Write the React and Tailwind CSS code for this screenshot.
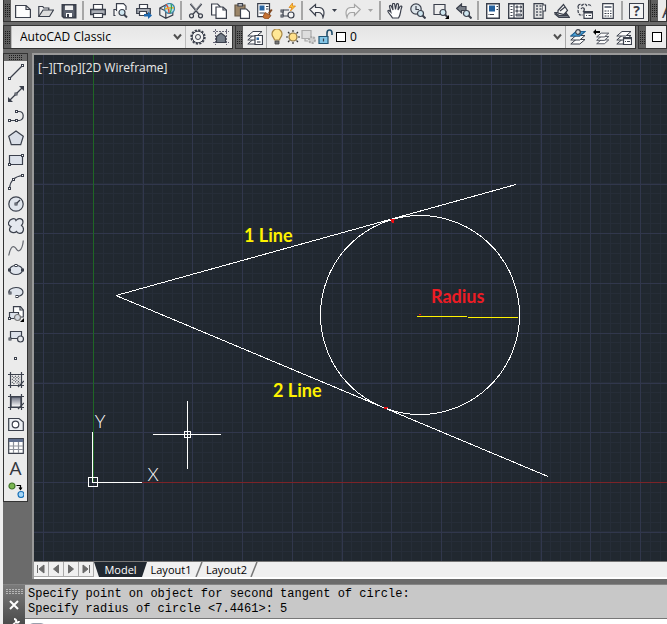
import React from 'react';

const INK = '#3b404c';

const Icon = ({ children, w = 16, h = 16 }) => (
    <svg width={w} height={h} viewBox={`0 0 ${w} ${h}`} fill="none" stroke={INK} strokeWidth="1.2" aria-hidden="true" className="shrink-0">
        {children}
    </svg>
);

// Small square grip drawn on the geometry icons
const Node = ({ x, y }) => <rect x={x - 1} y={y - 1} width="2" height="2" fill="#fff" stroke={INK} strokeWidth="1" />;

const Lens = ({ x, y }) => (
    <g>
        <path d={`M${x + 2} ${y + 2}L${x + 5} ${y + 5}`} strokeWidth="2" />
        <circle cx={x} cy={y} r="3" fill="#cfe6f0" />
    </g>
);

const Layers = () => (
    <g fill="#fbfbfb" strokeWidth="1">
        <path d="M.8 15h9l5.200-4.500H6z" />
        <path d="M.8 11h9L15 6.500H6z" />
        <path d="M.8 7h9L15 2.500H6z" />
    </g>
);

const fileIcons = [
    { label: 'New', art: <path d="M.6 2.500h10.500l4.300 4v8H.6zM11 2.500v4h4.400" fill="#fdfdfd" /> },
    { label: 'Open', art: <><path d="M.8 13.500v-10h4l1 1.500h5v2" fill="#f4f4f4" /><path d="M.8 13.500L5 7h10.500l-4 6.500z" fill="#ddd" /></> },
    { label: 'Save', art: <><path d="M1.500 2h13v12.500H3l-1.500-1.500z" fill="#5b616e" strokeWidth="2" /><path d="M4 2.500h8v4.500H4z" fill="#eee" stroke="none" /><path d="M5 10h6v4H5z" fill="#fff" stroke="none" /><path d="M6 11h2v3H6z" fill={INK} stroke="none" /></> },
];

const printIcons = [
    { label: 'Plot', art: <><path d="M3.500 6V1.500h9V6" fill="#fff" /><path d="M.7 6.500h14.600v5H.7z" fill="#a9adb5" strokeWidth="1.400" /><path d="M3.500 10.500h9v4h-9z" fill="#fff" /></> },
    { label: 'Plot Preview', art: <><path d="M2.500 12.500H1v-6h2M3.500 8V.7h7l2.500 2.500V7" fill="#fff" /><Lens x={9} y={9.5} /></> },
    { label: 'Publish', art: <><path d="M3.500 5V1.500h8V5" fill="#fff" /><path d="M.7 5.500h13.600v5H.7z" fill="#a9adb5" /><path d="M3.500 8.500h7v4h-7z" fill="#fff" /><path d="M8 11h4V8.500l4 4-4 3.500v-2.500H8z" fill="#1c66ad" stroke="none" /></> },
    { label: '3DDWF', art: <><path d="M.8 5l6-3 7 3v7l-7 3.300-6-3.300zM.8 5l6 3v7" fill="#eee" /><circle cx="10.500" cy="5.500" r="5" fill="#b5e3f3" stroke="#3d84a7" /><path d="M7 1.500c2 2 3 6 3 8.500" stroke="#df4a39" strokeWidth="1.500" /><path d="M6 6c3-1 6-2 9-1" stroke="#eaae2f" strokeWidth="1.500" /><path d="M12 1c1 3 1 5-1 9" stroke="#2f9e58" /></> },
];

const editIcons = [
    { label: 'Cut', art: <><path d="M2.500.8L11 11M13.500.8L5 11" strokeWidth="1.800" /><path d="M3 1l8 9M13 1l-8 9" stroke="#eee" strokeWidth=".5" /><circle cx="3.500" cy="12.800" r="2" /><circle cx="12.500" cy="12.800" r="2" /></> },
    { label: 'Copy', art: <><path d="M.6 1h6L9 3.500V12H.6z" fill="#fff" /><path d="M5 4h7l3.400 3v8.400H5z" fill="#fff" /><path d="M12 4v3h3" /></> },
    { label: 'Paste', art: <><path d="M1 2h10v11H1z" fill="#9b8568" stroke="#665947" /><path d="M4 .7h4.500V3H4z" fill="#e6e6e6" /><path d="M6.500 6h6l3 3v6.400h-9z" fill="#fff" /></> },
    { label: 'Match Properties', art: <><path d="M.7.7h11.800v13H.7z" fill="#fff" /><path d="M2.500 2.500h5v5h-5z" fill="#2663a1" stroke="none" /><path d="M9 3.500h2.500M9 6h2.500M2.500 10h5" /><path d="M14.800 6.500l-3 4" stroke="#7f471f" strokeWidth="2" /><path d="M8 9.500l6 3-3 3.500c-3 0-5-1-5-2.500z" fill="#c57132" stroke="#86461d" strokeWidth=".8" /></> },
    { label: 'Block Editor', art: <><path d="M3 7h6M3 7v6h6" /><circle cx="11" cy="12" r="3" fill="#f5f5f5" /><Node x={2} y={13} /><Node x={2} y={8} /><path d="M12.500 0L9 4.500h3L10.500 8 15.500 3h-3z" fill="#ffc73a" stroke="#db831b" strokeWidth=".8" /></> },
];

const undoArt = <path d="M.8 6.500L6.500 1.500v3h3.800c4.500 0 5.700 5 3.700 10-.5-3-1.500-5-4.500-5h-3v3z" fill="#f5f5f5" />;
const redoArt = <path d="M15.200 6.500L9.500 1.500v3H5.700C1.200 4.500 0 9.500 2 14.500c.5-3 1.500-5 4.500-5h3v3z" fill="#f2f2f2" stroke="#a5a5a5" />;

const viewIcons = [
    { label: 'Pan', art: <path d="M5.500 15C4 12 1 10 .8 8c.5-1.300 2 0 3 1L2.500 3.500c0-1.500 1.600-1.500 2 0L6 7 5.500 1.500c0-1.500 2-1.500 2.200 0L8.500 6.500l1-5c.3-1.300 2-1 2 .3L11 7l2-3.500c.9-1 2.200-.3 1.700.8C13 9 14 11 11.500 15z" fill="#fff" /> },
    { label: 'Zoom Realtime', art: <><circle cx="6" cy="6" r="5.200" fill="#dde5ea" /><path d="M6 3v3.500h3" /><Lens x={10.5} y={10.5} /></> },
    { label: 'Zoom Window', art: <><path d="M1 1.500h11v10H1z" fill="#eee" /><Lens x={10} y={9.5} /><path d="M16 12v4h-4z" fill="#000" stroke="none" /></> },
    { label: 'Zoom Previous', art: <><path d="M.5 5.500L5.500 1v2.500H10v4H5.500V10z" fill="#777d86" /><Lens x={10.5} y={10.5} /></> },
];

const paletteIcons = [
    { label: 'Properties', art: <><path d="M1.700.7h12.600v14.600H1.700z" fill="#fff" strokeWidth="1.400" /><path d="M4 2.500h6v6H4z" fill="#235f9c" stroke="none" /><path d="M11.500 3.500h1.500M11.500 6.500h1.500M5 11.500h4M3.500 11.500h1" /></> },
    { label: 'DesignCenter', art: <><path d="M.7.7h14.600v14.600H.7z" fill="#fff" strokeWidth="1.400" /><path d="M6 1v14M2.500 3.500h2M2.500 6.500h2M2.500 9.500h2M2.500 12.500h2" /><path d="M8 3h2v2H8zM12 3h1.500v2H12zM8 7h2v2H8zM12 7h1.500v2H12zM8 11h5.500v2H8z" fill="#9a9fa8" strokeWidth=".8" /></> },
    { label: 'Tool Palettes', art: <><path d="M3 .7h9v14.600H3z" fill="#e0e0e0" /><path d="M12 2h2.500v6H12" fill="#f7f7f7" /><path d="M5 3h2M8.500 3h2M5 6h2M8.500 6h2M5 9h2M8.500 9h2M5 12h2M8.500 12h2" strokeWidth="1.800" stroke="#757a84" /></> },
    { label: 'Sheet Set Manager', art: <><path d="M1 11l4 3.500h10.500L12 10z" fill="#777d88" /><path d="M1 9.500h6l7 3H5z" fill="#eee" /><path d="M4 7.500L9.500 1.500l4 6-3.500 4-6-1.500z" fill="#f6f6f6" /><path d="M6 8l5-4" /></> },
    { label: 'Markup Set Manager', art: <><path d="M1 3c1-2 3-2 4-.5C7 0 9 1 9.500 2.500 12 1 14 2 14 4M1 3c0 2 1 2 0 4 0 3 1 4 2 5h3" strokeDasharray="3 1" /><path d="M4 6c2-3 5 0 2 3" /><path d="M7 8.500h8.500v6.800H7z" fill="#fff" /><path d="M7 9.500h8.500" strokeWidth="2" /><path d="M9 12.500h1M11.500 12.500h2.500" /></> },
    { label: 'QuickCalc', art: <><path d="M2.700.7h10.600v14.600H2.700z" fill="#fff" /><path d="M4.500 3h7v2h-7z" fill="#777e8b" stroke="none" /><path d="M4.500 8h2M7.500 8h1.500M10 8h1.500M4.500 10.500h2M7.500 10.500h1.500M10 10.500h1.500M4.500 13h2M7.500 13h1.500M10 13h1.500" /></> },
];

const drawIcons = [
    { label: 'Line', art: <><path d="M2 14L14 2" /><Node x={1.5} y={14.5} /><Node x={14.5} y={1.5} /></> },
    { label: 'Construction Line', art: <><path d="M2 14L14 2" /><path d="M0 16v-5l5 5zM16 0v5l-5-5z" fill={INK} stroke="none" /><Node x={8} y={8} /></> },
    { label: 'Polyline', art: <><path d="M1.500 12.500H9M8 3.500h3c5.500 0 5.500 8 .5 9H9" /><Node x={1.5} y={12.5} /><Node x={8.5} y={12.5} /><Node x={8.5} y={3.5} /></> },
    { label: 'Polygon', art: <path d="M8 .9L15.300 6.300 12.700 14.700H3.300L.7 6.300z" fill="#d9dee7" /> },
    { label: 'Rectangle', art: <><path d="M1.500 3.500h13v9h-13z" fill="#dce1ea" /><Node x={1.5} y={12.5} /><Node x={14.5} y={3.5} /></> },
    { label: 'Arc', art: <><path d="M1.500 14.500C2 8 6 2.500 14.500 1.500" /><Node x={1.5} y={14.5} /><Node x={5.5} y={5.5} /><Node x={14.5} y={1.5} /></> },
    { label: 'Circle', art: <><circle cx="8" cy="8" r="7.200" fill="#e0e5ed" /><path d="M8 8l4-4" /><Node x={8} y={8} /></> },
    { label: 'Revision Cloud', art: <path d="M8 2.500C10-.5 15 0 15 4c0 1.500-.8 2.700-1.500 3.500 3 2 2.500 7.500-1.500 7.800-2 .2-3-.8-3.500-1.800-2 2-7 1-7-2 0-1.500.5-2 1.500-3C.5 7.500 0 5.500.8 4 2 .5 7-.5 8 2.500z" fill="#e4e8ef" /> },
    { label: 'Spline', art: <path d="M.7 15.500C2 9 4 5.500 6.500 7s2.500 5 5 3.500S15 4 15.300.5" stroke="#63666e" /> },
    { label: 'Ellipse', art: <><ellipse cx="8" cy="8" rx="6.500" ry="4.500" fill="#dfe4ec" /><Node x={1.5} y={8} /><Node x={14.5} y={8} /><Node x={8} y={3.5} /></> },
    { label: 'Ellipse Arc', art: <><path d="M1.500 9C-.5 6 4 3.500 8 3.500s7 2 7 4.500-2 4-6 4.500" fill="#dfe4ec" /><Node x={2} y={9} /><Node x={9} y={12.5} /></> },
    { label: 'Insert Block', art: <><path d="M5.500 6V.7h7L15.300 4v7H10" fill="#fff" /><path d="M12 .7V4h3" /><path d="M1.500 6.500h9v6h-9z" fill="#dce1ea" /><circle cx="9.500" cy="11.500" r="3" fill="#d4d9e1" stroke="#777" /><Node x={1.5} y={12.5} /><path d="M16 12v4h-4z" fill="#000" stroke="none" /></> },
    { label: 'Make Block', art: <><path d="M2.500 3.500h11v7h-11z" fill="#dce1ea" /><circle cx="12.500" cy="11" r="3" fill="#e6e8ec" /><Node x={2} y={11} /></> },
    { label: 'Point', art: <Node x={7.5} y={8.5} /> },
    { label: 'Hatch', art: <><path d="M2.500 0v16M0 2.500h16M13.500 0v16M0 13.500h16" /><path d="M4 10l3 2.500M4 7l7 5.500M4 4l8 7M7 4l5 4M10 4l2 1.500" strokeDasharray="1 1" /><path d="M10 15l6-6" /></> },
    { label: 'Gradient', art: <><path d="M3 3h10v10H3z" fill="url(#gradIcon)" /><path d="M2.500 0v16M0 2.500h16M13.500 0v16M0 13.500h16" /><path d="M10 15l6-6" /></> },
    { label: 'Region', art: <><path d="M.7 2.500H11L15.300 6v8.500H.7z" fill="#eceff3" /><circle cx="7.500" cy="8.500" r="3.300" fill="#fff" /></> },
    { label: 'Table', art: <><path d="M.7.700h14.600v14.600H.7z" fill="#fff" /><path d="M1 1h14v3H1z" fill="#5f6e8d" stroke="none" /><path d="M1 8h14M1 11.500h14M5.500 4v11M10.500 4v11" stroke="#8e929b" /></> },
];

const layerTools = [
    { label: 'Make Object Layer Current', art: <><Layers /><path d="M.8 7h9L15 2.500H6z" fill="#51a7d9" stroke="#23679b" /><circle cx="8" cy="3" r="2.300" fill="#ddd" /></> },
    { label: 'Layer Previous', art: <><g transform="translate(3 2) scale(.85)"><Layers /></g><path d="M0 3l3-3v2h4v2H3v2z" fill="#000" stroke="none" /></> },
    { label: 'Layer States', art: <><Layers /><path d="M7.500 8.500h8v7h-8z" fill="#fff" /><path d="M7.500 9.300h8" strokeWidth="1.800" /><path d="M9 12.500h1M11 12.500h3" /></> },
];

const ToolButton = ({ label, children, vertical }) => (
    <button
        type="button"
        aria-label={label}
        className={`flex shrink-0 items-center justify-center hover:bg-[#d5e4f3] ${vertical ? 'h-[22px] w-full' : 'h-full w-[23px]'}`}
    >
        {children}
    </button>
);

const IconGroup = ({ items, vertical }) => items.map((item) => (
    <ToolButton key={item.label} label={item.label} vertical={vertical}>
        <Icon>{item.art}</Icon>
    </ToolButton>
));

const Grip = () => (
    <span className="flex w-[7px] shrink-0 items-center justify-center bg-[#5e5e5e]">
        <svg width="5" height="13" aria-hidden="true" stroke="#1c1c1c" strokeDasharray="1 1">
            <path d="M.5 0v13M2.500 0v13M4.500 0v13" />
        </svg>
    </span>
);

const Separator = () => <span className="mx-[2px] my-px w-[2px] shrink-0 bg-[#a6a6a6]" />;

const DropArrow = ({ color }) => (
    <svg width="13" height="20" viewBox="0 0 13 20" aria-hidden="true"><path d="M4 8h5l-2.500 3z" fill={color} /></svg>
);

const Chevron = () => (
    <svg width="9" height="8" viewBox="0 0 9 8" aria-hidden="true" className="pointer-events-none absolute right-[3px] top-[7px]">
        <path d="M1 1.500l3.500 4 3.500-4" fill="none" stroke="#505050" strokeWidth="2" />
    </svg>
);

const Toolbar = ({ children, className = '' }) => (
    <div role="toolbar" className={`flex shrink-0 items-stretch border-x border-b border-[#333] bg-[#ebebeb] ${className}`}>
        <Grip />
        {children}
    </div>
);

const StandardBar = () => (
    <div className="flex h-[22px] gap-px">
        <Toolbar>
            <IconGroup items={fileIcons} />
            <Separator />
            <IconGroup items={printIcons} />
            <Separator />
            <IconGroup items={editIcons} />
            <Separator />
            <ToolButton label="Undo"><Icon>{undoArt}</Icon></ToolButton>
            <button type="button" aria-label="Undo list"><DropArrow color="#3b404c" /></button>
            <ToolButton label="Redo"><Icon>{redoArt}</Icon></ToolButton>
            <button type="button" aria-label="Redo list"><DropArrow color="#a5a5a5" /></button>
            <Separator />
            <IconGroup items={viewIcons} />
            <Separator />
            <IconGroup items={paletteIcons} />
            <Separator />
            <ToolButton label="Help">
                <span className="flex h-4 w-[15px] items-center justify-center border border-[#3b404c] bg-[#f4f4f4] text-[14px] font-bold leading-none text-[#3b404c]">?</span>
            </ToolButton>
        </Toolbar>
        <Toolbar className="min-w-0 flex-1 overflow-hidden">
            <button type="button" aria-label="Text Style" className="pl-1 text-[18px] leading-none text-[#3b404c]">A</button>
        </Toolbar>
    </div>
);

const layerFlags = [
    { label: 'Layer on', art: <><path d="M5.500 11C5.500 9 3 8 3 5a5 5 0 0 1 10 0c0 3-2.500 4-2.500 6z" fill="#ffe795" stroke="#a98743" /><path d="M6 12h4v3H6z" fill="#777" stroke="#444" strokeWidth=".8" /></> },
    { label: 'Thaw', art: <><circle cx="8" cy="8" r="4" fill="#ffe08a" stroke="#8e7440" /><path d="M8 1v2M8 13v2M1 8h2M13 8h2M3 3l1.500 1.500M11.500 11.500L13 13M13 3l-1.500 1.500M4.500 11.500L3 13" stroke="#333" /></> },
    { label: 'Viewport freeze', art: <g stroke="#aaa"><path d="M1 1.500h9v8H1zM4 9.500V12h3" fill="#ddd" /><circle cx="11" cy="11" r="3" fill="#d0d0d0" strokeWidth="2" strokeDasharray="2 1" /></g> },
    { label: 'Unlock', art: <><path d="M10 7V4c0-4 5-4 5 0v2" stroke="#214e6b" strokeWidth="1.600" /><path d="M2 7.500h9v7H2z" fill="#84c6e7" stroke="#225676" /><path d="M6.500 9.500v3" /></> },
];

const WorkspaceBar = () => (
    <div className="flex h-6 gap-[2px] border-t border-[#333]">
        <Toolbar>
            <label className="relative w-[175px] border-x border-[#bdbdbd]">
                <span className="sr-only">Workspace</span>
                <select className="block h-full w-full appearance-none bg-linear-to-b from-[#e6e6e6] to-[#f0f0f0] pl-2 text-[12px] leading-5 text-black">
                    <option>AutoCAD Classic</option>
                </select>
                <Chevron />
            </label>
            <ToolButton label="Workspace Settings">
                <Icon>
                    <circle cx="8" cy="8" r="6.800" strokeWidth="1.800" strokeDasharray="2.200 1.360" />
                    <circle cx="8" cy="8" r="5.800" fill="#f2f2f2" strokeWidth="1" />
                    <circle cx="8" cy="8" r="2.500" strokeWidth="1" />
                </Icon>
            </ToolButton>
            <ToolButton label="My Workspace">
                <Icon>
                    <path d="M2.500 0v16M13.500 0v16M0 2.500h16M0 13.500h16" strokeDasharray="2 1" stroke="#667" strokeWidth="1" />
                    <path d="M3.500 13.500V7.500L8 4l4.500 3.500v6z" fill="#747d89" />
                </Icon>
            </ToolButton>
        </Toolbar>
        <Toolbar>
            <ToolButton label="Layer Properties">
                <Icon>
                    <Layers />
                    <path d="M8 6.500h7.500v9H8z" fill="#fff" />
                    <path d="M9.500 8.500h2.500v2.500H9.500z" fill="#2b6ba8" stroke="none" />
                    <path d="M10 13h3.500" />
                </Icon>
            </ToolButton>
            <div className="relative flex w-[300px] items-center border-x border-[#aaa] bg-linear-to-b from-[#e4e4e4] to-[#f0f0f0] pl-[2px]">
                {layerFlags.map((flag) => (
                    <button type="button" key={flag.label} aria-label={flag.label}><Icon>{flag.art}</Icon></button>
                ))}
                <button type="button" aria-label="Layer colour" className="ml-[3px] h-[10px] w-[10px] border border-black bg-white" />
                <label className="h-full flex-1">
                    <span className="sr-only">Layer</span>
                    <select className="block h-full w-full appearance-none pl-1 text-[12px] leading-5 text-black">
                        <option>0</option>
                    </select>
                </label>
                <Chevron />
            </div>
            <IconGroup items={layerTools} />
        </Toolbar>
        <Toolbar className="min-w-0 flex-1 overflow-hidden">
            <button type="button" className="flex items-center gap-1 pl-[6px] text-[12px]">
                <span className="h-[10px] w-[10px] shrink-0 border border-black bg-white" />
                ByLayer
            </button>
        </Toolbar>
    </div>
);

const DrawBar = () => (
    <div role="toolbar" aria-label="Draw" className="w-[25px] shrink-0 self-start border border-[#333] bg-[#ebebeb]">
        <div className="flex h-[7px] items-center justify-center bg-[#6b6b6b]">
            <svg width="14" height="5" aria-hidden="true" stroke="#1c1c1c" strokeDasharray="1 1">
                <path d="M0 .5h14M0 2.500h14M0 4.500h14" />
            </svg>
        </div>
        <IconGroup items={drawIcons} vertical />
        <ToolButton label="Multiline Text" vertical>
            <span className="text-[19px] leading-none text-[#33363d]">A</span>
        </ToolButton>
        <ToolButton label="Add Selected" vertical>
            <Icon>
                <circle cx="4" cy="4" r="3" fill="#7ab551" stroke="#3e7327" />
                <circle cx="13" cy="12.500" r="3" fill="#a5d6f7" stroke="#1b72b8" />
                <path d="M8.500 3.500h4V7M11 5.500l1.500 2 1.500-2" stroke="#000" />
            </Icon>
        </ToolButton>
    </div>
);

// Major grid lines fall every 49.75 units, with five minor cells between them
const MAJOR = 49.75;
const gridLines = (start, count, step) => Array.from({ length: count }, (_, i) => Math.round(start + i * step) + 0.5);
const minorX = gridLines(-1, 200, MAJOR / 5);
const minorY = gridLines(-21, 160, MAJOR / 5);
const majorX = gridLines(9, 40, MAJOR);
const majorY = gridLines(29, 32, MAJOR);

const Drawing = () => (
    <svg className="absolute inset-0 h-full w-full" shapeRendering="crispEdges" fill="none" role="img" aria-label="Circle tangent to two lines">
        <path d={minorX.map((x) => `M${x} 0V1600`).join('') + minorY.map((y) => `M0 ${y}H2000`).join('')} stroke="#262d38" />
        <path d={majorX.map((x) => `M${x} 0V1600`).join('') + majorY.map((y) => `M0 ${y}H2000`).join('')} stroke="#31374c" />
        <path d="M59.500 0V427" stroke="#1f6625" />
        <path d="M59 427.500H2000" stroke="#7b2328" />

        {/* UCS icon */}
        <g stroke="#fff">
            <path d="M58.500 377V427.500H108" />
            <rect x="54.500" y="422.500" width="9" height="9" />
        </g>
        <g fill="#fff" className="font-['Lato'] text-[18px] font-light" textAnchor="middle">
            <text x="66" y="373">Y</text>
            <text x="119" y="426">X</text>
        </g>

        {/* Tangent lines and circle */}
        <g stroke="#fff">
            <path d="M82 240.500L482 129.500M82 240.500L514 421.500" />
            <circle cx="386" cy="260" r="99.500" />
        </g>
        <path d="M383 261.500H433M434 262.500H484" stroke="#fff200" />
        <path d="M356 164h5l-2 5zM350 352h4l-1 2h-3zM385 259h2v1h-2z" fill="#e80d12" />

        <g className="font-['Lato'] text-[18px] font-bold">
            <text x="210" y="187" fill="#fff200">1 Line</text>
            <text x="239" y="342" fill="#fff200">2 Line</text>
            <text x="397" y="248" fill="#ed1c24">Radius</text>
        </g>

        {/* Crosshair cursor */}
        <g stroke="#fff">
            <path d="M119 379.500H187M153.500 346V414" />
            <rect x="150.500" y="376.500" width="6" height="6" />
        </g>
    </svg>
);

const navArt = [
    { label: 'First layout', d: 'M3.5 3v8M10 3L5 7l5 4z' },
    { label: 'Previous layout', d: 'M9.5 3l-5 4 5 4z' },
    { label: 'Next layout', d: 'M4.5 3l5 4-5 4z' },
    { label: 'Last layout', d: 'M4 3l5 4-5 4zM10.5 3v8' },
];

const Slash = () => (
    <svg width="8" height="15" viewBox="0 0 8 15" aria-hidden="true" className="shrink-0"><path d="M7 0L1 15" stroke="#777" strokeWidth="1.500" /></svg>
);

const LayoutTabs = () => (
    <div className="flex h-[18px] items-start border-b-2 border-t border-b-white border-t-[#777] bg-[#f0f0f0] text-[11px] leading-[15px] text-black">
        {navArt.map((nav) => (
            <button key={nav.label} type="button" aria-label={nav.label} className="w-[15px] shrink-0 border-b border-r border-[#aaa]">
                <svg width="14" height="14" viewBox="0 0 14 14" fill="#6b6b6b" stroke="#6b6b6b" aria-hidden="true"><path d={nav.d} /></svg>
            </button>
        ))}
        <button type="button" className="h-[15px] w-[53px] bg-[#212830] text-white [clip-path:polygon(0_0,100%_0,calc(100%-5px)_100%,5px_100%)]">Model</button>
        <button type="button" className="h-[15px] w-[48px]">Layout1</button>
        <Slash />
        <button type="button" className="h-[15px] w-[47px]">Layout2</button>
        <Slash />
    </div>
);

const CommandLine = () => (
    <div className="flex h-10 shrink-0 overflow-hidden border-t border-[#858585]">
        <div className="flex w-[22px] shrink-0 flex-col items-center bg-linear-to-b from-[#7b7b7b] to-[#4c4c4c] pt-1">
            <svg width="17" height="5" stroke="#b5b5b5" strokeDasharray="2 1" aria-hidden="true" className="shrink-0"><path d="M0 .5h17M0 2.500h17M0 4.500h17" /></svg>
            <button type="button" aria-label="Close" className="mt-[6px] shrink-0">
                <svg width="10" height="10" viewBox="0 0 10 10" stroke="#fff" strokeWidth="2" aria-hidden="true"><path d="M1 1l8 8M9 1l-8 8" /></svg>
            </button>
            <button type="button" aria-label="Customize" className="mt-2 shrink-0">
                <svg width="12" height="12" viewBox="0 0 12 12" fill="none" stroke="#fff" strokeWidth="2" aria-hidden="true"><path d="M1 11l6-6M6 1c1 0 3 1 2 3 2 1 3 0 3-1" /></svg>
            </button>
        </div>
        <div className="min-w-0 flex-1">
            <div className="h-[34px] whitespace-pre border-b border-[#777] bg-[#c8c8c8] pl-[3px] pt-[2px] font-['Liberation_Mono',monospace] text-[12px] leading-[15px] text-black">
                <p>Specify point on object for second tangent of circle:</p>
                <p>Specify radius of circle &lt;7.4461&gt;: 5</p>
            </div>
            <div className="flex bg-white pl-1 pt-[4px]">
                <span className="h-4 w-4 shrink-0 rounded-sm border border-[#9a9fac] bg-[#eee]" />
                <input aria-label="Command" className="ml-1 h-4 flex-1 outline-none" />
            </div>
        </div>
    </div>
);

const App = () => (
    <div className="flex h-screen flex-col overflow-hidden border-l-3 border-[#efefef] bg-[#6b6b6b] font-['Open_Sans',sans-serif]">
        <svg width="0" height="0" className="absolute" aria-hidden="true">
            <linearGradient id="gradIcon" x1="0" y1="0" x2="0" y2="1">
                <stop offset="0" stopColor="#6b7080" />
                <stop offset="1" stopColor="#fff" />
            </linearGradient>
        </svg>
        <header className="flex shrink-0 flex-col gap-[3px]">
            <StandardBar />
            <WorkspaceBar />
        </header>
        <div className="flex min-h-0 flex-1 gap-1 pb-[5px] pt-1">
            <DrawBar />
            <main className="flex min-w-0 flex-1 flex-col border-l-2 border-t-2 border-[#999]">
                <div className="relative flex-1 bg-[#212830]">
                    <Drawing />
                    <p className="relative pl-1 pt-[5px] text-[12px] leading-4 text-[#e8e8e8]">[−][Top][2D Wireframe]</p>
                </div>
                <LayoutTabs />
            </main>
        </div>
        <CommandLine />
    </div>
);

export default App;
